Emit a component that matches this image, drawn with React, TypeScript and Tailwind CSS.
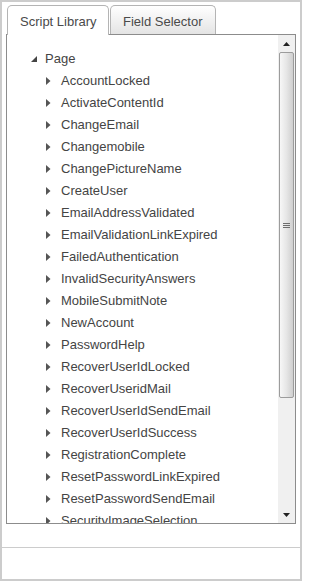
import React from "react";

const pages = [
  "AccountLocked",
  "ActivateContentId",
  "ChangeEmail",
  "Changemobile",
  "ChangePictureName",
  "CreateUser",
  "EmailAddressValidated",
  "EmailValidationLinkExpired",
  "FailedAuthentication",
  "InvalidSecurityAnswers",
  "MobileSubmitNote",
  "NewAccount",
  "PasswordHelp",
  "RecoverUserIdLocked",
  "RecoverUseridMail",
  "RecoverUserIdSendEmail",
  "RecoverUserIdSuccess",
  "RegistrationComplete",
  "ResetPasswordLinkExpired",
  "ResetPasswordSendEmail",
  "SecurityImageSelection",
];

const Collapsed = () => (
  <svg width="5" height="8" viewBox="0 0 5 8" className="shrink-0">
    <polygon points="0,0 4.5,4 0,8" fill="#555555" />
  </svg>
);

const Expanded = () => (
  <svg width="6" height="6" viewBox="0 0 6 6" className="shrink-0">
    <polygon points="6,0 6,6 0,6" fill="#444444" />
  </svg>
);

const Scrollbar = () => (
  <div className="w-[17px] h-full flex flex-col bg-[#f0f0f0]">
    <div className="h-[17px] flex items-center justify-center">
      <svg width="7" height="4" viewBox="0 0 7 4">
        <polygon points="3.5,0 7,4 0,4" fill="#222222" />
      </svg>
    </div>
    <div className="flex-1 flex flex-col">
      <div className="h-[346px] mx-[1px] rounded-[2px] border border-[#9c9c9c] bg-gradient-to-r from-[#f7f7f7] via-[#e6e6e6] to-[#cfcfcf] flex flex-col items-center justify-center gap-[1px]">
        <div className="w-[7px] h-[1px] bg-[#6e6e6e]" />
        <div className="w-[7px] h-[1px] bg-[#6e6e6e]" />
        <div className="w-[7px] h-[1px] bg-[#6e6e6e]" />
      </div>
    </div>
    <div className="h-[17px] flex items-center justify-center">
      <svg width="7" height="4" viewBox="0 0 7 4">
        <polygon points="0,0 7,0 3.5,4" fill="#222222" />
      </svg>
    </div>
  </div>
);

export default function App() {
  return (
    <div className="w-[302px] h-[581px] border-2 border-[#cccccc] bg-white flex flex-col font-['Liberation_Sans',Arial,sans-serif] text-[13px]">
      <div className="flex items-start ml-[5px] mt-[3px] -mb-px h-[30px] relative z-10">
        <div className="h-[30px] w-[102px] border border-b-0 border-[#b4b4b4] rounded-t-[5px] bg-white flex items-center pl-[12px] pt-[2px] text-[#4a4a4a]">
          Script Library
        </div>
        <div className="h-[29px] w-[106px] ml-px border border-b-0 border-[#b4b4b4] rounded-t-[5px] bg-gradient-to-b from-[#ffffff] to-[#e4e4e4] flex items-center pl-[12px] pt-[3px] text-[#4a4a4a]">
          Field Selector
        </div>
      </div>
      <div className="mx-[4px] h-[490px] border border-[#8c8c8c] flex">
        <div className="flex-1 overflow-hidden pt-[13px] text-[#444444]">
          <div className="h-[22px] flex items-center">
            <div className="w-[24px]" />
            <Expanded />
            <span className="ml-[8px]">Page</span>
          </div>
          {pages.map((p) => (
            <div key={p} className="h-[22px] flex items-center whitespace-nowrap">
              <div className="w-[39px] shrink-0" />
              <Collapsed />
              <span className="ml-[10px]">{p}</span>
            </div>
          ))}
        </div>
        <Scrollbar />
      </div>
      <div className="mt-[23px] border-t border-[#cccccc]" />
    </div>
  );
}
